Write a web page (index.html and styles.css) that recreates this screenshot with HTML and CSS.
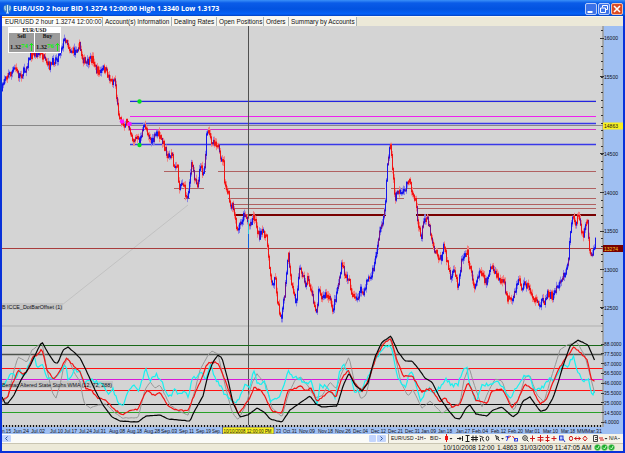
FILE: index.html
```
<!DOCTYPE html>
<html lang="en">
<head>
    <meta charset="UTF-8">
    <title>EUR/USD 2 hour</title>
    <link rel="stylesheet" href="styles.css">
</head>
<body>
    <div id="window">
        <div id="titlebar">
            <svg class="logo" width="9" height="10" viewBox="0 0 9 10">
                <circle cx="4.5" cy="4.5" r="4" fill="#3f86c8"/>
                <path d="M2 2v3q0 1 1 1M7 2v3q0 1-1 1M4.5 1v8M3 9h3" stroke="#d5ecfa" fill="none"/>
            </svg>
            <span class="title">EUR/USD 2 hour BID 1.3274 12:00:00 High 1.3340 Low 1.3173</span>
            <div class="controls">
                <svg width="12" height="12" viewBox="0 0 12 12"><rect x=".5" y=".5" width="11" height="11" rx="1.5" fill="#3b72e8" stroke="#b9cdf8"/><path d="M2.5 9h5" stroke="#fff" stroke-width="2"/></svg>
                <svg width="12" height="12" viewBox="0 0 12 12"><rect x=".5" y=".5" width="11" height="11" rx="1.5" fill="#3b72e8" stroke="#b9cdf8"/><path d="M4.5 4.5V2.5h5v4h-2M2.5 5h5v4.500h-5z" stroke="#fff" fill="none"/></svg>
                <svg width="12" height="12" viewBox="0 0 12 12"><rect x=".5" y=".5" width="11" height="11" rx="1.5" fill="#dc4b24" stroke="#f3c0ae"/><path d="M3 3l6 6M9 3l-6 6" stroke="#fff" stroke-width="1.600"/></svg>
            </div>
        </div>

        <div id="tabs">
            <div class="tab active">EUR/USD 2 hour 1.3274 12:00:00</div>
            <div class="tab t2">Account(s) Information</div>
            <div class="tab t3">Dealing Rates</div>
            <div class="tab t4">Open Positions</div>
            <div class="tab t5">Orders</div>
            <div class="tab t6">Summary by Accounts</div>
        </div>

        <div id="chart">
            <svg id="plot" width="621" height="408" viewBox="2 26 621 408"></svg>
            <div id="quote">
                <div class="pair">EUR/USD</div>
                <div class="cell"><b>Sell</b><span>1.32<i>74</i><svg width="5" height="9" viewBox="0 0 5 9"><path d="M2.500 9V1.500M.5 3.500l2-2 2 2" stroke="#10f010" fill="none"/></svg></span></div>
                <div class="cell"><b>Buy</b><span>1.32<i>76</i><svg width="5" height="9" viewBox="0 0 5 9"><path d="M2.500 9V1.500M.5 3.500l2-2 2 2" stroke="#10f010" fill="none"/></svg></span></div>
            </div>
        </div>

        <div id="toolbar">
            <div class="scroll">
                <span class="arrow"><svg width="9" height="7" viewBox="0 0 9 7"><path d="M5.500 1.500l-2 2 2 2" stroke="#345a9c" fill="none"/></svg></span>
                <span class="thumb"></span>
                <span class="arrow"><svg width="9" height="7" viewBox="0 0 9 7"><path d="M3.500 1.500l2 2-2 2" stroke="#345a9c" fill="none"/></svg></span>
            </div>
            <div class="tools">
                <span class="pick w1">EUR/USD</span>
                <span class="pick w2">1H</span>
                <span class="pick w3">BID</span>
                <svg width="166" height="9" viewBox="443 434 166 9" fill="none">
                    <path d="M446.500 434v8" stroke="#e01010"/>
                    <rect x="445" y="436" width="3" height="4" fill="#f01010"/>
                    <path d="M449.500 438h3l-1.500 1.500zM501 438h3l-1.500 1.500z" fill="#222"/>
                    <path d="M457 438.500h4M459.500 437l1.500 1.500-1.500 1.500M462.500 436v5M465.500 435.500h4M467.500 435.500v6M465.500 441.500h4M473 435.500v6M476 435.500v6M471 437.500h7M471 439.500h7" stroke="#222"/>
                    <path d="M479.500 436l4 1.500-1.500 1 2 3M480.500 438v3.500" stroke="#333"/>
                    <ellipse cx="487.500" cy="438.500" rx="1.300" ry="2.200" stroke="#333"/>
                    <path d="M495 435.500l4 2-1.500.500 2 3M496 436.500l1 3.500" stroke="#333"/>
                    <path d="M505.500 437l4-1M507.500 436v3l-1 2" stroke="#3040e0"/>
                    <path d="M508 438l3-2" stroke="#e02020"/>
                    <path d="M512.500 436l3 4" stroke="#e02020"/>
                    <rect x="514.500" y="438.500" width="3" height="2.500" stroke="#3040e0"/>
                    <circle cx="525" cy="438" r="2.300" stroke="#333"/>
                    <path d="M527 440l1.500 1.500M524 438h2" stroke="#333"/>
                    <path d="M532.500 435.500v6M530 438.500h5M537.500 437.500h6M537.500 440h6M540.500 435v7M545.500 437.500h4M545.500 440.500h4M547.500 435v7M551.500 438.500h5M554 436v5" stroke="#d01818"/>
                    <rect x="559.500" y="436" width="3.500" height="4" fill="#b8c8ff" stroke="#2438d0"/>
                    <path d="M563 439l2 3" stroke="#2438d0"/>
                    <ellipse cx="571" cy="438.500" rx="1.600" ry="2.200" stroke="#d01818"/>
                    <path d="M574.500 438.500h6M576.500 437l-2 1.500 2 1.500M578.500 437l2 1.500-2 1.500" stroke="#d01818"/>
                    <path d="M585 436l-2 2.500 2 2.500 2-2.500z" stroke="#d01818"/>
                    <path d="M593.500 435.500h4v6h-4zM595 437.500h3M595 439.500h3" stroke="#444"/>
                    <path d="M599 438h4M600 440h4" stroke="#d01818"/>
                    <path d="M604.500 438h3l-1.500 1.500z" fill="#222"/>
                </svg>
                <span class="pick w4">N/A</span>
            </div>
        </div>

        <div id="status">
            <span class="s1">10/10/2008 12:00</span>
            <span class="s2">1.4863</span>
            <span class="s3">31/03/2009 11:47:05 AM</span>
            <svg width="22" height="7" viewBox="0 .5 22 7">
                <g fill="#18a828" stroke="#8fd890" stroke-width=".6"><circle cx="3.500" cy="4" r="3"/><circle cx="10.500" cy="4" r="3"/><circle cx="17.500" cy="4" r="3"/></g>
                <path d="M2 4l1.500 1.500L5 2.500M9 4l1.500 1.500L12 2.500M16 4l1.500 1.500L19 2.500" stroke="#c8ffc8" fill="none"/>
            </svg>
        </div>
    </div>
    <script src="chart.js"></script>
</body>
</html>
```
FILE: styles.css
```
body{
    margin: 0;
    overflow: hidden;
    font-family: "Liberation Sans", Arial, sans-serif;
    color: #111;
}
#window{
    width: 625px;
    height: 453px;
    box-sizing: border-box;
    display: grid;
    grid-template-rows: 16px 10px 408px 9px 8px;
    grid-template-columns: 621px;
    border: 2px solid #0831d9;
    border-top: none;
    background-color: #ece9d8;
}
#titlebar{
    margin: 0 -2px;
    padding: 0 2px 0 3px;
    display: flex;
    align-items: center;
    background: linear-gradient(#3a90f8 0, #0a5ce8 3px, #0253e0 9px, #0462f8 14px, #0341c0 16px);
}
.title{
    margin-left: 1px;
    padding-top: 2px;
    flex: 1;
    color: white;
    font-family: "Open Sans", sans-serif;
    font-size: 7px;
    letter-spacing: 0.03px;
    font-weight: bold;
    line-height: 10px;
    white-space: nowrap;
}
.logo{
    margin-top: 1px;
}
.controls{
    display: flex;
    gap: 1px;
    padding-top: 2px;
}
#tabs{
    display: flex;
    background-color: #ece9d8;
    border-top: 1px solid #f8f7f0;
    box-sizing: border-box;
}
.tab{
    box-sizing: border-box;
    height: 9px;
    padding-left: 2px;
    background-color: #f8f7f1;
    border-right: 1px solid #a9b3b5;
    font-size: 6.4px;
    line-height: 9px;
    white-space: nowrap;
}
.active{
    width: 101px;
    padding-left: 3px;
    background-color: #fdfdfb;
    border-top: 1px solid #f0a030;
    line-height: 8px;
}
.t2{ width: 69px; }
.t3{ width: 45px; }
.t4{ width: 47px; }
.t5{ width: 25px; }
.t6{ width: 68px; }

#chart{
    position: relative;
}
#plot{
    display: block;
    background-color: #d4d4d4;
}
#plot text{
    font-size: 6.2px;
    fill: #101018;
}
#plot .narrow{
    font-family: "Liberation Sans Narrow", "Liberation Sans", sans-serif;
    font-size: 5.4px;
}
/* quote box floats over the chart */
#quote{
    position: absolute;
    left: 6px;
    top: 1px;
    width: 53px;
    height: 26px;
    box-sizing: border-box;
    padding: 0 1px 1px;
    display: grid;
    grid-template-columns: 1fr 1fr;
    grid-template-rows: 6px 1fr;
    column-gap: 1px;
    background-color: #fff;
    font-family: "Liberation Serif", serif;
    font-size: 6px;
}
.pair{
    grid-column: 1 / 3;
    text-align: center;
    line-height: 6px;
    font-size: 5.5px;
    font-weight: bold;
}
.cell{
    display: flex;
    flex-direction: column;
    align-items: center;
    justify-content: space-between;
    background-color: #9c9c9c;
    line-height: 7px;
}
.cell b{
    font-size: 5.5px;
}
.cell span{
    display: flex;
    align-self: stretch;
    align-items: center;
    padding-left: 1px;
    font-size: 6.3px;
    font-weight: bold;
    line-height: 11px;
    white-space: nowrap;
}
.cell i{
    color: #10f010;
    font-size: 7px;
    font-style: normal;
}
.cell svg{
    margin-left: auto;
}

#toolbar{
    display: flex;
    background-color: #ece9d8;
}
.scroll{
    width: 386px;
    display: flex;
    align-items: center;
    background-color: #fbfbf8;
}
.arrow, .thumb{
    width: 9px;
    height: 7px;
    border-radius: 1px;
    background-color: #c3d5fd;
}
.arrow svg{
    display: block;
}
.thumb{
    width: 7px;
    margin-left: auto;
    margin-right: 1px;
}
.scroll .arrow:last-child{
    margin-right: 2px;
}
.tools{
    flex: 1;
    display: flex;
    align-items: center;
    border-left: 1px solid #aca899;
    padding-left: 2px;
    background-color: #f6f4ea;
}
.tools svg{
    flex: none;
}
.pick{
    flex: none;
    font-size: 5px;
    line-height: 9px;
    white-space: nowrap;
}
.pick::after{
    content: "";
    display: inline-block;
    margin: 0 0 1px 1px;
    border: 1.5px solid transparent;
    border-top-color: #222;
    border-bottom: none;
}
.w1{ width: 26px; }
.w2{ width: 13px; }
.w3{ width: 13px; }
.w4{ width: 13px; }

#status{
    display: flex;
    align-items: center;
    justify-content: flex-end;
    padding-right: 7px;
    border-top: 1px solid #c9c5b2;
    font-size: 6.6px;
    line-height: 7px;
    white-space: nowrap;
}
.s1{ width: 54px; }
.s2{ width: 23px; }
.s3{ width: 74px; }
```
FILE: chart.js
```
var plot = document.getElementById('plot');

function add(tag, attrs, text) {
  var el = document.createElementNS('http://www.w3.org/2000/svg', tag);
  for (var k in attrs) el.setAttribute(k, attrs[k]);
  if (text) el.textContent = text;
  plot.appendChild(el);
}
function line(x1, y1, x2, y2, color, width) {
  add('line', {x1: x1, y1: y1, x2: x2, y2: y2, stroke: color, 'stroke-width': width || 1});
}
function label(x, y, text, width, cls) {
  add('text', {x: x, y: y, textLength: width, lengthAdjust: 'spacingAndGlyphs', 'class': cls || ''}, text);
}
// same noise on every load
var seed = 7;
function rnd() {
  seed = (seed * 16807) % 2147483647;
  return seed / 2147483647;
}

var price = '2,90 5,76 10,74 16,68 18,75 22,74 26,68 30,56 36,53 42,55 46,64 50,66 54,60 58,57 61,48 64,41 66,38 70,50 75,52 79,44 82,56 86,64 93,58 96,70 101,72 104,68 108,75 112,82 115,78 116,92 118,110 121,120 123,124 127,123 130,128 133,140 137,138 139,142 143,130 145,125 149,135 152,143 157,132 162,141 166,150 169,158 172,151 174,170 177,163 179,186 183,182 187,200 190,178 192,162 194,175 198,185 201,160 203,178 205,160 207,130 211,140 214,141 218,144 221,165 223,155 225,188 228,192 231,210 233,205 237,232 241,222 245,212 249,226 254,215 259,236 264,232 267,240 270,270 272,287 275,275 278,305 281,317 284,300 287,270 288,250 290,275 293,290 296,302 299,270 302,270 305,285 308,278 311,290 314,305 317,310 319,285 322,298 326,295 330,300 333,310 337,290 340,275 342,264 346,278 349,277 352,296 356,300 361,290 364,295 367,278 371,278 375,262 378,240 382,222 385,212 386,185 388,160 390,142 391,150 393,175 395,200 398,190 401,196 405,190 408,178 412,190 416,200 418,225 421,238 424,220 427,215 430,230 434,248 438,255 441,260 444,245 448,265 451,280 454,270 458,285 462,258 467,250 470,268 475,288 480,268 486,283 490,268 493,270 496,275 500,280 504,283 507,297 512,303 515,293 517,285 519,277 522,290 525,282 531,292 535,300 539,308 543,297 545,302 548,293 553,296 557,287 561,279 565,273 568,265 570,235 572,217 575,222 578,217 583,235 587,222 588,226 589,245 592,258 595,244';

var black = '2,397 5,403 8,403 14,395 22,378 30,366 38,349 42,342 48,353 55,363 58,363 63,350 68,347 75,353 80,358 86,370 95,390 103,405 112,417 120,421 138,422 146,416 160,415 168,419 190,421 194,412 203,396 208,375 213,362 218,355 222,358 228,380 233,403 240,417 248,415 257,408 264,412 270,419 282,422 290,410 300,403 310,396 316,404 322,407 337,406 343,386 349,373 355,385 362,391 368,383 375,357 382,342 391,336 398,352 405,361 412,361 418,368 425,378 432,382 440,398 448,410 455,418 460,419 466,408 470,405 476,414 487,416 493,410 502,407 513,417 518,413 523,401 530,397 540,411 546,410 553,398 558,383 563,366 570,346 578,340 588,345 595,361';
var red = '2,400 7,398 14,380 18,370 22,374 27,372 33,357 37,355 42,349 47,370 53,379 58,374 62,366 67,358 72,364 80,372 86,388 92,391 98,398 106,400 115,410 123,415 130,410 138,410 144,395 148,391 155,396 160,392 168,406 175,410 188,411 193,398 200,382 207,364 212,362 218,363 225,380 232,400 238,413 243,408 250,398 254,387 262,391 268,403 272,411 282,413 288,390 296,388 301,385 306,391 311,388 317,401 325,395 330,391 336,397 342,378 348,370 354,382 362,391 368,381 377,355 385,342 391,339 396,357 403,376 412,376 422,392 430,388 440,402 445,398 452,407 460,404 468,382 476,400 487,404 492,391 502,389 512,408 518,400 525,384 533,390 540,404 546,400 553,382 560,367 568,355 574,347 580,352 587,360 592,381 595,381';
var grey = '2,402 8,397 14,370 18,357 27,362 32,350 42,343 47,370 52,392 56,398 60,385 64,365 68,358 74,372 80,382 84,403 90,408 98,405 106,404 114,412 122,418 138,418 145,390 150,382 155,388 160,385 170,405 180,412 188,415 195,390 200,370 208,355 212,351 218,354 225,385 232,412 238,420 246,405 252,383 257,374 266,385 272,408 282,417 288,395 295,380 301,377 308,386 315,398 322,396 330,382 336,389 342,372 349,357 354,380 361,399 366,395 372,370 380,345 390,338 396,360 401,383 408,396 413,390 422,408 430,401 442,413 450,408 460,403 464,380 469,367 474,384 482,407 489,390 495,379 502,381 508,398 514,411 520,395 525,377 530,376 537,395 544,402 552,375 560,350 567,345 577,342 585,356 590,375 595,395';
var cyan = '2,388 6,380 12,372 15,378 20,370 24,377 30,362 34,357 37,366 42,364 46,377 52,379 58,377 62,370 66,362 68,380 74,370 80,372 84,384 90,378 96,382 103,385 109,393 113,390 118,403 123,405 127,393 133,385 139,391 143,378 146,367 150,380 156,374 163,384 169,399 175,387 178,396 184,390 188,398 192,378 197,378 201,370 206,380 210,363 215,378 220,385 226,396 231,400 238,402 245,385 250,390 253,370 258,384 264,381 270,400 276,400 283,390 288,369 294,379 298,377 306,385 311,380 317,403 320,385 328,388 335,398 340,370 344,365 350,375 354,390 360,393 366,380 372,368 378,356 385,348 391,345 397,376 405,387 411,369 415,380 420,400 428,388 433,393 440,388 446,380 452,385 458,385 463,370 467,369 470,385 476,402 482,385 490,385 497,380 504,390 510,400 515,390 520,382 525,374 530,378 534,390 542,388 548,380 556,378 562,365 567,368 573,356 578,372 583,380 588,378 592,397 595,388';

function points(s) {
  return s.split(' ').map(function (p) { return p.split(',').map(Number); });
}
function sample(pts, x) {
  for (var i = 1; i < pts.length - 1 && pts[i][0] < x; i++);
  var a = pts[i - 1], b = pts[i];
  return a[1] + (b[1] - a[1]) * (x - a[0]) / (b[0] - a[0]);
}
function curve(s, color, noise, width) {
  var pts = points(s), out = [];
  for (var x = 2; x <= 595; x += 1.5) {
    out.push(x + ',' + (sample(pts, x) + (rnd() - 0.5) * noise).toFixed(1));
  }
  add('polyline', {points: out.join(' '), fill: 'none', stroke: color, 'stroke-width': width});
}

// faint trend line and pane separator
line(62, 305, 188, 205, '#bcbcbc', 0.8);
line(2, 326, 603, 326, '#bdbdbd', 1.5);

// price levels
line(130, 101.5, 596, 101.5, '#2424e0', 1.3);
line(130, 102.6, 596, 102.6, '#eeeebc', 0.6);
line(130, 116.5, 596, 116.5, '#f020f0');
line(130, 123.5, 596, 123.5, '#3838e8', 1.3);
line(2, 125.5, 603, 125.5, '#888888');
line(130, 129.5, 596, 129.5, '#d030c0');
line(130, 144.5, 596, 144.5, '#3838e8', 1.3);
[[171.5, 164, 206], [171.5, 218, 596], [188.5, 174, 204], [188.5, 224, 385], [188.5, 391, 596],
 [198.5, 184, 190], [198.5, 228, 386], [198.5, 396, 404], [198.5, 416, 596],
 [204.5, 232, 386], [204.5, 417, 596], [208.5, 232, 386], [208.5, 417, 596]].forEach(function (l) {
  line(l[1], l[0], l[2], l[0], '#ac5454', 0.9);
});
line(234, 215, 386, 215, '#780000', 2);
line(416, 215, 596, 215, '#780000', 2);
line(2, 248.5, 603, 248.5, '#a83c3c');

// crosshair
line(248.5, 26, 248.5, 425, '#505050');

// price bars
function drawBars() {
  var pts = points(price), prev = 90;
  for (var x = 2.5; x < 596; x++) {
    var y = sample(pts, x) + (rnd() - 0.5) * 7;
    var slope = sample(pts, x + 1) - sample(pts, x - 1);
    var up = slope + (rnd() - 0.5) * 7 < 0;
    var high = Math.min(y, prev), low = Math.max(y, prev);
    line(x, high - 1 - rnd() * 4, x, low + 1 + rnd() * 4, up ? '#8a84e4' : '#f08484');
    line(x, high - 0.8, x, low + 1.2, rnd() < 0.2 ? '#70108c' : up ? '#1616ec' : '#f01414');
    prev = y;
  }
}
drawBars();
line(248.5, 230, 248.5, 248, '#1060d8');
line(248.5, 220, 248.5, 234, '#30c8d8');
add('circle', {cx: 139.5, cy: 101.5, r: 2.2, fill: '#00e020'});
add('circle', {cx: 139.5, cy: 145, r: 2.2, fill: '#00e020'});
add('circle', {cx: 122, cy: 121.5, r: 2.3, fill: '#ff10ff'});
add('circle', {cx: 129.5, cy: 124, r: 2.3, fill: '#ff10ff'});

// stochastics pane
line(2, 345.5, 603, 345.5, '#186818');
line(2, 354.5, 603, 354.5, '#4c524c', 1.5);
line(2, 368.5, 603, 368.5, '#ff1010', 1.2);
line(2, 379.5, 603, 379.5, '#d818d8');
line(2, 390.5, 603, 390.5, '#ff1010', 1.2);
line(2, 404.5, 603, 404.5, '#101010');
line(2, 412.5, 603, 412.5, '#28a028', 1.2);
add('rect', {x: 2, y: 303, width: 61, height: 7, fill: '#c4c4c4'});
label(2, 309, 'B ICCE_DotBarOffset (1)', 60);
add('rect', {x: 2, y: 381, width: 111, height: 7, fill: '#c4c4c4'});
curve(grey, '#969696', 0.6, 1);
curve(cyan, '#18f0f0', 4, 1.2);
curve(red, '#f41414', 1.6, 1.2);
curve(black, '#080808', 0.3, 1.2);
label(2, 386.8, 'Bernac Altered State Stohs WMA (12, 72, 288)', 110);

// right axis
add('rect', {x: 603.5, y: 26, width: 20, height: 408, fill: '#9fbff2'});
line(603, 26, 603, 427, '#8a8a88', 1.2);
for (var i = -1; i < 39; i++) {
  if (38 + i * 7.7 > 26) line(601, Math.round(38 + i * 7.7) + 0.5, 603, Math.round(38 + i * 7.7) + 0.5, '#333');
}
[['16000', 38], ['15500', 76.7], ['14500', 153.8], ['14000', 192.4], ['13500', 231], ['13000', 269.5], ['12500', 307.8]].forEach(function (t) {
  line(600, Math.floor(t[1]) + 0.5, 604, Math.floor(t[1]) + 0.5, '#333');
  label(604, t[1] + 2.2, t[0], 14);
});
['88.0000', '77.5000', '67.0000', '56.5000', '46.0000', '35.5000', '25.0000', '14.5000', '4.0000'].forEach(function (t, i) {
  var y = 344 + i * 9.8;
  line(601, Math.floor(y) + 0.5, 604, Math.floor(y) + 0.5, '#333');
  label(604, y + 2, t, i == 8 ? 15 : 17.5, 'narrow');
});
add('rect', {x: 603, y: 122.5, width: 20, height: 7, fill: '#f8f020'});
label(604, 128.2, '14863', 14);
add('rect', {x: 603, y: 245, width: 20, height: 7, fill: '#780000'});
add('text', {x: 604, y: 250.7, textLength: 14, lengthAdjust: 'spacingAndGlyphs', style: 'fill:#f8c820'}, '13274');

// date axis
for (var x = 3.5; x < 602; x += 3) line(x, 425, x, 427, '#111', 1.3);
add('rect', {x: 2, y: 427, width: 621, height: 7, fill: '#9fbff2'});
[['n.15', 2, 9], ['Jun.24', 13, 16], ['Jul.02', 31, 14], ['Jul.10', 50, 13], ['Jul.17', 64, 13], ['Jul.24', 79, 13], ['Jul.31', 93, 13],
 ['Aug.08', 109, 16], ['Aug.18', 127, 15], ['Aug.28', 144, 16], ['Sep.03', 161, 16], ['Sep.11', 179, 15], ['Sep.19', 196, 15], ['Sep.', 212, 9],
 ['23', 276, 5], ['Oct.31', 283, 14], ['Nov.09', 299, 16], ['Nov.18', 318, 15], ['Nov.26', 335, 16], ['Dec.04', 353, 15], ['Dec.12', 371, 15],
 ['Dec.21', 388, 15], ['Dec.31', 405, 15], ['Jan.09', 421, 15], ['Jan.18', 438, 14], ['Jan.27', 456, 14], ['Feb.04', 472, 16], ['Feb.12', 491, 15],
 ['Feb.20', 508, 15], ['Mar.01', 525, 15], ['Mar.10', 543, 15], ['Mar.18', 561, 14], ['MMMar.31', 577, 25]].forEach(function (d) {
  label(d[1], 432.6, d[0], d[2], 'narrow');
});
add('rect', {x: 222.5, y: 427, width: 51.5, height: 7, fill: '#f8f020', stroke: '#3038a0', 'stroke-width': 0.6});
label(223.5, 432.6, '10/10/2008 12:00:00 PM', 48, 'narrow');
```
